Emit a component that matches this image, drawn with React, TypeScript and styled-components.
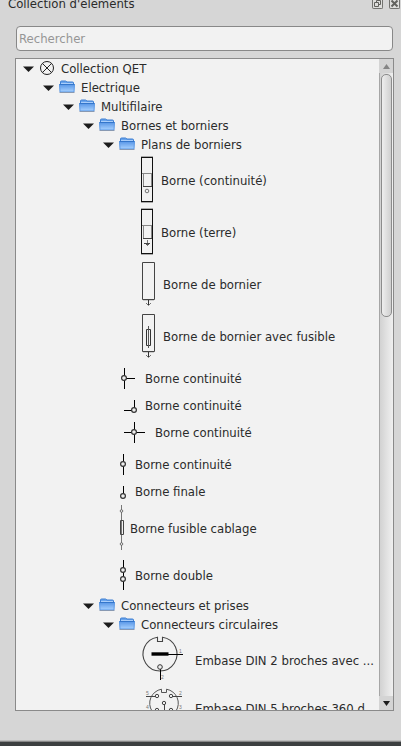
import React, { useState } from 'react';
import type { ReactNode } from 'react';
import styled, { createGlobalStyle } from 'styled-components';

const GlobalStyle = createGlobalStyle`
  *, *::before, *::after { box-sizing: border-box; }
  body {
    margin: 0;
    background: #d6d6d6;
    color: #2b2b2b;
    font-family: "DejaVu Sans Condensed", "DejaVu Sans", sans-serif;
    font-size: 13px;
  }
`;

const Dock = styled.section`
  display: flex;
  flex-direction: column;
  height: 100vh;
  overflow: hidden;
  background: #d6d6d6;
`;

const TitleBar = styled.header`
  display: flex;
  justify-content: space-between;
  align-items: flex-start;
  flex: none;
  height: 26px;
  padding: 0 1px 0 8px;
`;

const Title = styled.h1`
  margin: 0;
  font-size: 13px;
  font-weight: 400;
  line-height: 8px;
`;

const TitleButtons = styled.div`
  display: flex;
  gap: 6px;
`;

const TitleButton = styled.button`
  display: block;
  width: 11px;
  height: 9px;
  padding: 0;
  border: 1px solid #737370;
  border-top: 0;
  border-radius: 0 0 2px 2px;
  background: #dededc;
  svg { display: block; }
`;

const Search = styled.input`
  flex: none;
  height: 25px;
  margin: 0 8px 0 16px;
  padding: 0 2px;
  border: 1px solid #888;
  border-radius: 4px;
  outline: 0;
  background: #f2f2f2;
  color: #2b2b2b;
  font: inherit;
  &::placeholder { color: #969696; opacity: 1; }
`;

const TreeFrame = styled.div`
  display: flex;
  flex: 1;
  min-height: 0;
  margin: 7px 7px 0 15px;
  border: 1px solid #8a8a8a;
  background: #f2f2f2;
`;

const TreeView = styled.nav`
  flex: 1;
  min-width: 0;
  overflow: hidden;
  padding-left: 3px;
`;

const Branch = styled.ul<{ $root?: boolean }>`
  margin: 0;
  padding: 0 0 0 ${p => (p.$root ? 0 : 20)}px;
  list-style: none;
`;

const Row = styled.div<{ $height: number; $leaf?: boolean }>`
  display: flex;
  align-items: center;
  height: ${p => p.$height}px;
  padding-left: ${p => (p.$leaf ? 20 : 0)}px;
  white-space: nowrap;
  svg { display: block; flex: none; }
`;

const Toggle = styled.button<{ $open: boolean }>`
  display: flex;
  justify-content: center;
  flex: none;
  width: 18px;
  margin-right: 2px;
  padding: 0;
  border: 0;
  background: none;
  svg { transform: rotate(${p => (p.$open ? 0 : -90)}deg); }
`;

const Label = styled.span<{ $leaf?: boolean }>`
  padding: ${p => (p.$leaf ? 1 : 0)}px 0 0 6px;
  line-height: 15px;
`;

const ScrollBar = styled.div`
  display: flex;
  flex-direction: column;
  flex: none;
  width: 14px;
`;

const ScrollButton = styled.button`
  display: flex;
  align-items: center;
  justify-content: center;
  flex: none;
  height: 14px;
  padding: 0;
  border: 0;
  background: #d4d4d4;
`;

const Track = styled.div`
  flex: 1;
  border-left: 1px solid #a6a6a6;
  background: linear-gradient(90deg, #d2d2d2, #f0f0f0);
`;

const Thumb = styled.div`
  height: 39%;
  margin: 1px 1px 0 1px;
  border: 1px solid #8c8c8c;
  border-radius: 5px;
  background: linear-gradient(90deg, #eee, #cfcfcf);
`;

const Footer = styled.footer`
  flex: none;
  height: 35px;
  border-bottom: 4px solid #3c3f40;
  background: linear-gradient(#d6d6d6 29px, #6e6e6e 31px);
`;

const Folder = () => (
  <svg width="16" height="15" viewBox="0 0 16 15">
    <defs>
      <linearGradient id="folder" x1="0" y1="0" x2="0" y2="1">
        <stop offset="0" stopColor="#5896e6" />
        <stop offset="1" stopColor="#a9d2ff" />
      </linearGradient>
    </defs>
    <path d="M1.5 11V2Q1.5 1 2.5 1H6.5L8 2H13.5Q14.5 2 14.5 3V11Z" fill="#69a4ed" stroke="#3e7fd2" />
    <path d="M2 3.5H14" stroke="#a8cdfa" />
    <path d="M0.5 4.5H15.5L15 12H1Z" fill="url(#folder)" stroke="#5a98e5" />
    <path d="M0.5 4.5H15.5" stroke="#3476cb" />
    <path d="M0.5 12.5H15.5" stroke="#8899b2" />
  </svg>
);

const Lamp = () => (
  <svg width="16" height="17" viewBox="0 0 16 17" fill="none" stroke="#222">
    <circle cx="8" cy="8" r="6.5" />
    <path d="M3.4 3.4 12.6 12.6M12.6 3.4 3.4 12.6" />
  </svg>
);

type SymbolProps = { w: number; h: number; children: ReactNode };
const Symbol = ({ w, h, children }: SymbolProps) => (
  <svg width={w} height={h} viewBox={`0 0 ${w} ${h}`} fill="none" stroke="#000" overflow="visible">
    {children}
  </svg>
);

const TerminalBody = () => (
  <>
    <path d="M2 2.5H14M2 48.5H14" stroke="#aaa" />
    <path d="M2.5 3V48M13.5 3V48" stroke="#111" />
    <path d="M2 3.5H14M2 47.5H14" stroke="#111" />
    <path d="M3 19.5H13M4.5 19V33M12.5 19V33" stroke="#888" />
    <path d="M4 32.5H13" stroke="#444" />
  </>
);

const TerminalContinuity = () => (
  <Symbol w={16} h={52}>
    <TerminalBody />
    <circle cx="8" cy="37" r="1.8" stroke="#555" strokeWidth="0.8" />
  </Symbol>
);

const TerminalEarth = () => (
  <Symbol w={16} h={52}>
    <TerminalBody />
    <path d="M8.5 34V40" stroke="#777" />
    <path d="M5 37.5H11" stroke="#444" />
    <path d="M7 38.5H10" stroke="#555" />
  </Symbol>
);

const StripTerminal = ({ fuse }: { fuse?: boolean }) => (
  <Symbol w={18} h={52}>
    <path d="M3.5 4.5H15.5V41.5H3.5Z" stroke="#444" />
    <path d="M4 42.5H15" stroke="#ccc" />
    <path d="M9.5 42V47" stroke="#333" />
    <path d="M7 45 9.5 47.5 12 45" stroke="#666" strokeWidth="0.9" />
    {fuse && (
      <>
        <path d="M7.5 19.5H11.5V35.5H7.5Z" stroke="#333" />
        <path d="M9.5 16V38" stroke="#555" />
      </>
    )}
  </Symbol>
);

const Pin = ({ x, y }: { x: number; y: number }) => (
  <circle cx={x} cy={y} r="2.4" fill="#eee" stroke="#333" strokeWidth="1.2" />
);

const JunctionRight = () => (
  <Symbol w={20} h={32}>
    <path d="M5.5 6V27M5 16.5H16" />
    <Pin x={5} y={16} />
  </Symbol>
);

const JunctionCorner = () => (
  <Symbol w={20} h={22}>
    <path d="M15.5 6V16M5 16.5H15" />
    <Pin x={15} y={16} />
  </Symbol>
);

const JunctionCross = () => (
  <Symbol w={30} h={32}>
    <path d="M15.5 6V27M5 16.5H26" />
    <Pin x={15} y={16} />
  </Symbol>
);

const JunctionStraight = () => (
  <Symbol w={10} h={32}>
    <path d="M4.5 6V27" />
    <Pin x={4} y={16} />
  </Symbol>
);

const JunctionEnd = () => (
  <Symbol w={10} h={22}>
    <path d="M4.5 6V16" />
    <Pin x={4} y={16} />
  </Symbol>
);

const WiringFuse = () => (
  <Symbol w={5} h={52}>
    <path d="M2.5 3V48" stroke="#777" />
    <path d="M1.5 18.5H4.5V32.5H1.5Z" stroke="#444" />
    <circle cx="2.5" cy="9" r="1.3" fill="#eee" stroke="#555" strokeWidth="0.8" />
    <circle cx="2.5" cy="42" r="1.3" fill="#eee" stroke="#555" strokeWidth="0.8" />
  </Symbol>
);

const DoubleJunction = () => (
  <Symbol w={10} h={42}>
    <path d="M4.5 6V36" />
    <Pin x={4} y={16} />
    <Pin x={4} y={25} />
  </Symbol>
);

const PinNumber = styled.text`
  font: 5px "Liberation Sans", sans-serif;
  fill: #777;
  stroke: none;
`;

const DinTwo = () => (
  <Symbol w={50} h={52}>
    <path d="M18.5 3.2A17 17 0 1 0 23.5 3.2V7.5H18.5Z" stroke="none" />
    <path d="M18.5 3.2A17 17 0 1 0 23.5 3.2V7.5H18.5Z" stroke="#444" strokeWidth="1.1" />
    <path d="M12.5 20H29.5" strokeWidth="3.4" />
    <path d="M29 20.5H44M21.5 35V46" />
    <circle cx="21" cy="33" r="2.3" fill="#eee" stroke="#333" />
    <PinNumber x="40" y="19">1</PinNumber>
    <PinNumber x="22" y="45">2</PinNumber>
  </Symbol>
);

const DinFive = () => (
  <Symbol w={50} h={44}>
    <path d="M22.5 3.2A14.3 14.3 0 1 0 27.5 3.2V6.5H22.5Z" stroke="#555" />
    <path d="M7 10.5H17M33 10.5H43M25.5 18V32M7 24.5H17M33 24.5H43" stroke="#444" />
    {[[18, 10], [32, 10], [25, 17], [18, 24], [32, 24]].map(([x, y]) => (
      <circle key={`${x}-${y}`} cx={x} cy={y} r="1.7" fill="#eee" stroke="#444" />
    ))}
    <PinNumber x="7" y="9">5</PinNumber>
    <PinNumber x="40" y="9">2</PinNumber>
    <PinNumber x="7" y="23">4</PinNumber>
    <PinNumber x="40" y="23">3</PinNumber>
  </Symbol>
);

type Item = { name: string; icon: ReactNode; height?: number; children?: Item[] };

const collection: Item = {
  name: 'Collection QET',
  icon: <Lamp />,
  children: [{
    name: 'Electrique',
    icon: <Folder />,
    children: [{
      name: 'Multifilaire',
      icon: <Folder />,
      children: [
        {
          name: 'Bornes et borniers',
          icon: <Folder />,
          children: [
            {
              name: 'Plans de borniers',
              icon: <Folder />,
              children: [
                { name: 'Borne (continuité)', icon: <TerminalContinuity />, height: 52 },
                { name: 'Borne (terre)', icon: <TerminalEarth />, height: 52 },
                { name: 'Borne de bornier', icon: <StripTerminal />, height: 52 },
                { name: 'Borne de bornier avec fusible', icon: <StripTerminal fuse />, height: 52 },
              ],
            },
            { name: 'Borne continuité', icon: <JunctionRight />, height: 32 },
            { name: 'Borne continuité', icon: <JunctionCorner />, height: 22 },
            { name: 'Borne continuité', icon: <JunctionCross />, height: 32 },
            { name: 'Borne continuité', icon: <JunctionStraight />, height: 32 },
            { name: 'Borne finale', icon: <JunctionEnd />, height: 22 },
            { name: 'Borne fusible cablage', icon: <WiringFuse />, height: 52 },
            { name: 'Borne double', icon: <DoubleJunction />, height: 42 },
          ],
        },
        {
          name: 'Connecteurs et prises',
          icon: <Folder />,
          children: [{
            name: 'Connecteurs circulaires',
            icon: <Folder />,
            children: [
              { name: 'Embase DIN 2 broches avec ...', icon: <DinTwo />, height: 52 },
              { name: 'Embase DIN 5 broches 360 d...', icon: <DinFive />, height: 44 },
            ],
          }],
        },
      ],
    }],
  }],
};

const TreeItem = ({ item }: { item: Item }) => {
  const [open, setOpen] = useState(true);
  return (
    <li>
      <Row $height={item.height ?? 19} $leaf={!item.children}>
        {item.children && (
          <Toggle $open={open} aria-expanded={open} aria-label={item.name} onClick={() => setOpen(!open)}>
            <svg width="12" height="6" viewBox="0 0 12 6"><path d="M1 0.5H12L6.5 6Z" fill="#1c1c1c" /></svg>
          </Toggle>
        )}
        {item.icon}
        <Label $leaf={!item.children}>{item.name}</Label>
      </Row>
      {item.children && open && (
        <Branch>
          {item.children.map((child, i) => <TreeItem key={i} item={child} />)}
        </Branch>
      )}
    </li>
  );
};

export default function App() {
  return (
    <>
      <GlobalStyle />
      <Dock>
        <TitleBar>
          <Title>Collection d'éléments</Title>
          <TitleButtons>
            <TitleButton aria-label="Détacher">
              <svg width="9" height="8" viewBox="0 0 9 8" fill="none" stroke="#62625e">
                <path d="M3.5 2.5V0.5H7.5V4.5H5.5M1.5 2.5H5.5V6.5H1.5Z" />
              </svg>
            </TitleButton>
            <TitleButton aria-label="Fermer">
              <svg width="9" height="8" viewBox="0 0 9 8" fill="none" stroke="#62625e" strokeWidth="2">
                <path d="M1.5 0.5 7.5 6.5M7.5 0.5 1.5 6.5" />
              </svg>
            </TitleButton>
          </TitleButtons>
        </TitleBar>
        <Search type="text" placeholder="Rechercher" aria-label="Rechercher" />
        <TreeFrame>
          <TreeView aria-label="Collection">
            <Branch $root><TreeItem item={collection} /></Branch>
          </TreeView>
          <ScrollBar>
            <ScrollButton aria-label="Défiler vers le haut">
              <svg width="7" height="5" viewBox="0 0 7 5"><path d="M0 5 3.5 0 7 5Z" fill="#858585" /></svg>
            </ScrollButton>
            <Track><Thumb /></Track>
            <ScrollButton aria-label="Défiler vers le bas">
              <svg width="7" height="5" viewBox="0 0 7 5"><path d="M0 0H7L3.5 5Z" fill="#1c1c1c" /></svg>
            </ScrollButton>
          </ScrollBar>
        </TreeFrame>
        <Footer />
      </Dock>
    </>
  );
}
